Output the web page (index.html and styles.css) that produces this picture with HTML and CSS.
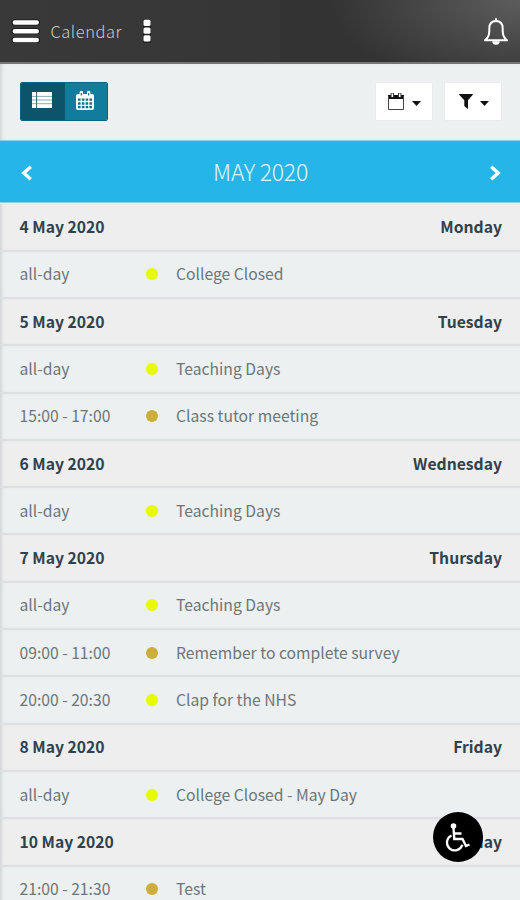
FILE: index.html
```html
<!DOCTYPE html>
<html lang="en">
<head>
<meta charset="utf-8">
<title>Calendar</title>
<link rel="stylesheet" href="styles.css">
</head>
<body>
<div class="app">
  <header class="topbar">
    <svg class="menu" width="30" height="28" viewBox="0 0 30 28"><path d="M3.500 5.500h22.500M3.500 14.200h22.500M3.500 23h22.500" stroke="#151515" stroke-width="6" stroke-linecap="round"/><path d="M3.800 5.500h22M3.800 14.200h22M3.800 23h22" stroke="#fff" stroke-width="4.400" stroke-linecap="round"/></svg>
    <h1 class="title">Calendar</h1>
    <svg class="more" width="12" height="28" viewBox="0 0 12 28"><path d="M2 3h8v23H2z" fill="#202020"/><g fill="#fff"><rect x="2.500" y="2.800" width="7" height="6.300" rx="1.500"/><rect x="2.500" y="10.500" width="7" height="6.300" rx="1.500"/><rect x="2.500" y="18.300" width="7" height="6.300" rx="1.500"/></g></svg>
    <svg class="bell" width="28" height="30" viewBox="0 0 28 30"><path d="M14 4.500V3M3 24.300c3-2.300 4.300-5 4.300-9.300v-2.500C7.300 8 9.500 5 14 5s6.700 3 6.700 7.500V15c0 4.300 1.300 7 4.300 9.300z" fill="none" stroke="#fff" stroke-width="2" stroke-linejoin="round" stroke-linecap="round"/><path d="M10.300 25.300h7.400a3.700 3.500 0 0 1-7.400 0z" fill="#fff"/></svg>
  </header>
  <div class="toolbar">
    <div class="views">
      <span class="view active"><svg width="20" height="16" viewBox="0 0 20 16"><path d="M0 0h20v16H0z" fill="#fff"/><path d="M0 4.400h20M0 8h20M0 11.700h20" stroke="#7da3ad" stroke-width=".9"/><path d="M4.600 0v16" stroke="#34616e"/></svg></span>
      <span class="view"><svg width="18" height="19" viewBox="0 0 18 19"><path d="M2 3h14q2 0 2 2v12q0 2-2 2H2q-2 0-2-2V5q0-2 2-2z" fill="#fff"/><path d="M5.300 1.500v3M12.700 1.500v3" stroke="#fff" stroke-width="3.400" stroke-linecap="round"/><path d="M5.300 2v2.500M12.700 2v2.500" stroke="#11708d" stroke-width="1.200"/><path d="M2 8.700h14M2 12.500h14M2 16.200h14" stroke="#176f8d" stroke-width="2.300" stroke-dasharray="2.600 1.200"/></svg></span>
    </div>
    <div class="actions">
      <span class="drop"><svg width="18" height="19" viewBox="0 0 18 19"><path d="M1 3h16v4H1z" fill="#111"/><path d="M1.500 4v13.500h15V4" fill="none" stroke="#444"/><path d="M5.300 1v4.500M12.700 1v4.500" stroke="#333" stroke-width="3.400"/><path d="M5.300 1.500V5M12.700 1.500V5" stroke="#fff" stroke-width="1.500"/></svg><svg class="caret" width="9" height="5" viewBox="0 0 9 5"><path d="M0 0h9L4.500 5z" fill="#111"/></svg></span>
      <span class="drop"><svg class="funnel" width="14" height="15" viewBox="0 0 14 15"><path d="M.4 0h13.200q.6 0 .2.700L9 6.200V14q0 1-.8.400L5.300 12V6.200L.2.700Q-.2 0 .4 0z" fill="#111"/></svg><svg class="caret" width="9" height="5" viewBox="0 0 9 5"><path d="M0 0h9L4.500 5z" fill="#111"/></svg></span>
    </div>
  </div>
  <nav class="month">
    <svg width="12" height="16" viewBox="0 0 12 16"><path d="M9.800 1.800L2.800 8l7 6.200" fill="none" stroke="#fff" stroke-width="3.400"/></svg>
    <h2 class="month-name">MAY 2020</h2>
    <svg width="12" height="16" viewBox="0 0 12 16"><path d="M2.200 1.800L9.200 8l-7 6.200" fill="none" stroke="#fff" stroke-width="3.400"/></svg>
  </nav>
  <main class="agenda">
    <div class="row day"><span>4 May 2020</span><span>Monday</span></div>
    <div class="row event"><span class="time">all-day</span><i class="dot"></i><span>College Closed</span></div>
    <div class="row day"><span>5 May 2020</span><span>Tuesday</span></div>
    <div class="row event"><span class="time">all-day</span><i class="dot"></i><span>Teaching Days</span></div>
    <div class="row event"><span class="time">15:00 - 17:00</span><i class="dot gold"></i><span>Class tutor meeting</span></div>
    <div class="row day"><span>6 May 2020</span><span>Wednesday</span></div>
    <div class="row event"><span class="time">all-day</span><i class="dot"></i><span>Teaching Days</span></div>
    <div class="row day"><span>7 May 2020</span><span>Thursday</span></div>
    <div class="row event"><span class="time">all-day</span><i class="dot"></i><span>Teaching Days</span></div>
    <div class="row event"><span class="time">09:00 - 11:00</span><i class="dot gold"></i><span>Remember to complete survey</span></div>
    <div class="row event"><span class="time">20:00 - 20:30</span><i class="dot"></i><span>Clap for the NHS</span></div>
    <div class="row day"><span>8 May 2020</span><span>Friday</span></div>
    <div class="row event"><span class="time">all-day</span><i class="dot"></i><span>College Closed - May Day</span></div>
    <div class="row day"><span>10 May 2020</span><span>Sunday</span></div>
    <div class="row event"><span class="time">21:00 - 21:30</span><i class="dot gold"></i><span>Test</span></div>
  </main>
  <div class="access"><svg width="27" height="29" viewBox="0 0 27 29"><circle cx="9.500" cy="3" r="2.800" fill="#fff"/><path d="M9.500 5l.8 11h8.200l3.500 7 3.500-1.500M10 10.500h7.500" fill="none" stroke="#fff" stroke-width="2.400"/><path d="M7.500 12.500a7.800 7.800 0 1 0 10.800 9.200" fill="none" stroke="#fff" stroke-width="2.300"/></svg></div>
</div>
</body>
</html>
```

FILE: styles.css
```css
* { box-sizing: border-box; }
body { margin: 0; background: #ecf0f1; font-family: "Noto Sans CJK SC", "Noto Sans", sans-serif; }
.app { position: relative; width: 520px; height: 900px; overflow: hidden; }
svg { display: block; flex: none; }
.topbar { display: flex; align-items: center; height: 64px; padding: 0 10px 0 11px; border-bottom: 2px solid #767676; background: radial-gradient(ellipse 190px 90px at 100% 0, #5d5d5d, #333 100%) right / 240px 100% no-repeat, linear-gradient(90deg, #393939, #333); }
.title { margin: 0 0 0 9.5px; width: 72px; color: #c9c9c9; font-size: 16.5px; font-weight: 300; letter-spacing: .5px; line-height: 28px; white-space: nowrap; }
.more { margin-left: 18.5px; }
.bell { margin-left: auto; }
.toolbar { display: flex; justify-content: space-between; height: 76px; padding: 18px 19px 0 20px; box-shadow: inset 3px 0 3px -1px #d3d7d8; }
.views { display: flex; width: 88px; height: 39px; border: 1px solid #0e647e; border-radius: 2px; overflow: hidden; }
.view { display: flex; flex: 1; align-items: center; justify-content: center; padding: 0 1px 2px 0; background: #117c9b; }
.active { padding: 0 2px 3px 0; background: #0c5468; }
.actions { display: flex; gap: 13px; padding-top: 1px; }
.drop { display: flex; align-items: center; justify-content: center; gap: 7px; width: 56px; height: 37px; padding-bottom: 1px; background: #fff; box-shadow: 0 0 1px #d4d8d9; }
.funnel { margin-left: 1px; }
.caret { margin-top: 4px; }
.month { display: flex; align-items: center; justify-content: space-between; height: 63px; padding: 2px 19px 0 21px; background: #25b5e6; border-top: 1px solid #8bd0e7; border-bottom: 1px solid #8bd0e7; }
.month-name { margin: 0 1px 0 0; padding-bottom: 4px; color: #e0f6fd; font-size: 23px; font-weight: 300; letter-spacing: -.3px; line-height: 30px; }
.agenda { padding-top: 1.4px; background: #eee; }
.row { display: flex; align-items: center; height: 47.3px; padding: 0 18px 0 19.5px; border-bottom: 2px solid #dddfe0; font-size: 15.7px; line-height: 24px; white-space: nowrap; box-shadow: inset 3px 0 3px -1px #d3d7d8; }
.day { justify-content: space-between; background: #eee; color: #2f424d; font-weight: 700; }
.event { background: #ecf0f1; color: #6d7679; }
.time { width: 126.5px; }
.dot { width: 12px; height: 12px; margin: 0 18px 0 0; border-radius: 50%; background: #e6fa00; }
.gold { background: #ccae3c; }
.access { position: absolute; left: 433px; top: 812px; display: flex; align-items: center; justify-content: center; width: 50px; height: 50px; padding-right: 2px; border-radius: 50%; background: #000; }
```
